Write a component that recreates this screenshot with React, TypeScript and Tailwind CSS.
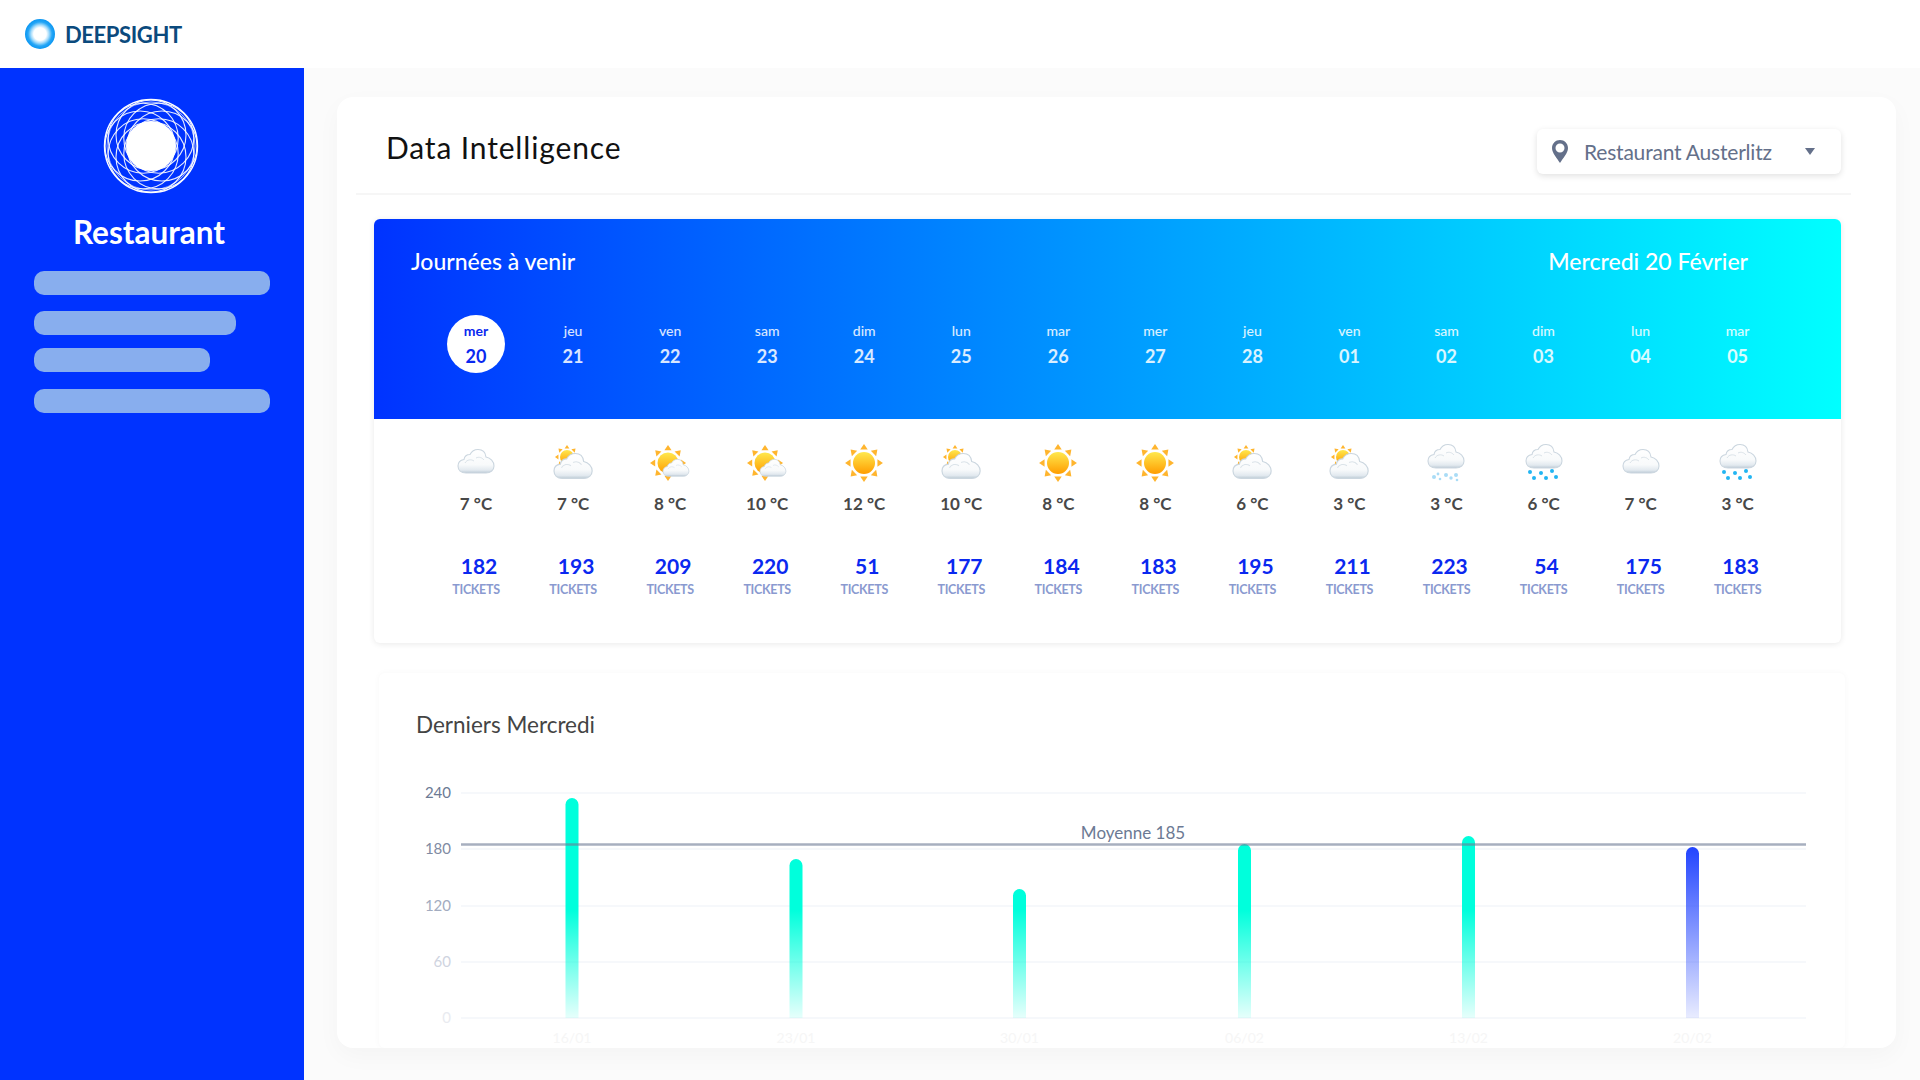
const days = [
  { name: 'mer', date: '20', icon: 'cloud', temp: 7, tickets: 182 },
  { name: 'jeu', date: '21', icon: 'sunBehind', temp: 7, tickets: 193 },
  { name: 'ven', date: '22', icon: 'sunCloud', temp: 8, tickets: 209 },
  { name: 'sam', date: '23', icon: 'sunCloud', temp: 10, tickets: 220 },
  { name: 'dim', date: '24', icon: 'sun', temp: 12, tickets: 51 },
  { name: 'lun', date: '25', icon: 'sunBehind', temp: 10, tickets: 177 },
  { name: 'mar', date: '26', icon: 'sun', temp: 8, tickets: 184 },
  { name: 'mer', date: '27', icon: 'sun', temp: 8, tickets: 183 },
  { name: 'jeu', date: '28', icon: 'sunBehind', temp: 6, tickets: 195 },
  { name: 'ven', date: '01', icon: 'sunBehind', temp: 3, tickets: 211 },
  { name: 'sam', date: '02', icon: 'snow', temp: 3, tickets: 223 },
  { name: 'dim', date: '03', icon: 'rain', temp: 6, tickets: 54 },
  { name: 'lun', date: '04', icon: 'cloud', temp: 7, tickets: 175 },
  { name: 'mar', date: '05', icon: 'rain', temp: 3, tickets: 183 }
]

const menuBars = [
  { width: 'w-[236px]', margin: 'mt-0' },
  { width: 'w-[202px]', margin: 'mt-[16px]' },
  { width: 'w-[176px]', margin: 'mt-[13px]' },
  { width: 'w-[236px]', margin: 'mt-[17px]' }
]

const cloudPath = 'M8 24C3 24 0 21 0 17C0 13.500 2.500 11 6 10.500C6.500 7.500 9 5.500 12 5.500C13.500 2.500 16.500 0.500 20 0.500C24.500 0.500 27.500 3.500 28 8C32.500 9 36 12.500 36 17C36 21 32.500 24 28 24Z'

function Cloud({ x, y, scale = 1 }: { x: number; y: number; scale?: number }) {
  return (
    <g transform={`translate(${x} ${y}) scale(${scale})`}>
      <path d={cloudPath} fill="url(#cloudFill)" stroke="#cbd6df" strokeWidth="1.100" />
      <path d="M7 14C9 10.500 13 10 16 12M18 9C21 7.500 24 8.500 26 11" fill="none" stroke="#dbe3e9" strokeWidth="1" />
    </g>
  )
}

function Sun({ cx, cy, r }: { cx: number; cy: number; r: number }) {
  const rays = [0, 45, 90, 135, 180, 225, 270, 315]
  return (
    <g>
      {rays.map((angle) => (
        <polygon
          key={angle}
          transform={`rotate(${angle} ${cx} ${cy})`}
          points={`${cx - r * 0.34},${cy - r * 1.22} ${cx + r * 0.34},${cy - r * 1.22} ${cx},${cy - r * 1.72}`}
          fill="#ffb52e"
        />
      ))}
      <circle cx={cx} cy={cy} r={r} fill="url(#sunFill)" />
    </g>
  )
}

function WeatherIcon({ type }: { type: string }) {
  return (
    <svg width="40" height="40" viewBox="0 0 40 40">
      {type === 'cloud' && <Cloud x={2} y={6} />}
      {type === 'sun' && <Sun cx={20} cy={20} r={11} />}
      {type === 'sunCloud' && (
        <>
          <Sun cx={18} cy={20} r={10.5} />
          <Cloud x={13} y={16} scale={0.72} />
        </>
      )}
      {type === 'sunBehind' && (
        <>
          <Sun cx={14} cy={14} r={7} />
          <Cloud x={1} y={10} scale={1.06} />
        </>
      )}
      {type === 'rain' && (
        <>
          <Cloud x={2} y={1} />
          {[[5, 29], [9, 35], [16, 30], [21, 35], [27, 28], [31, 34]].map(([cx, cy]) => (
            <circle key={cx} cx={cx + 1} cy={cy} r="2" fill="#22b5f2" />
          ))}
        </>
      )}
      {type === 'snow' && (
        <>
          <Cloud x={2} y={1} />
          {[[8, 34, 2], [12, 31, 1.4], [14, 36, 1.3], [20, 32, 2], [25, 35, 1.7], [30, 32, 2], [31, 37, 1.3]].map(([cx, cy, r]) => (
            <circle key={`${cx}-${cy}`} cx={cx} cy={cy} r={r} fill="#a9dcf6" />
          ))}
        </>
      )}
    </svg>
  )
}

function SidebarLogo() {
  const angles = [0, 45, 90, 135, 180, 225, 270, 315]
  return (
    <svg width="96" height="96" viewBox="0 0 96 96" className="block">
      <circle cx="48" cy="48" r="46.500" fill="none" stroke="white" strokeWidth="1.400" />
      <circle cx="48" cy="48" r="44" fill="none" stroke="white" strokeWidth="0.800" opacity="0.8" />
      {angles.map((angle) => (
        <circle
          key={angle}
          transform={`rotate(${angle} 48 48)`}
          cx="48"
          cy="37"
          r="35"
          fill="none"
          stroke="white"
          strokeWidth="1.100"
          opacity="0.9"
        />
      ))}
      <circle cx="48" cy="48" r="25" fill="white" />
    </svg>
  )
}

const grid = [
  { label: '240', y: 33, color: '#6c7a94' },
  { label: '180', y: 89, color: '#7f8ba3' },
  { label: '120', y: 146, color: '#a3acc0' },
  { label: '60', y: 202, color: '#cfd4df' },
  { label: '0', y: 258, color: '#e9ebf0' }
]

const bars = [
  { x: 193, top: 38, label: '16/01' },
  { x: 417, top: 99, label: '23/01' },
  { x: 640.5, top: 129, label: '30/01' },
  { x: 865.5, top: 84, label: '06/02' },
  { x: 1089.5, top: 76, label: '13/02' },
  { x: 1313.5, top: 87, label: '20/02', current: true }
]

function Chart() {
  return (
    <svg width="1466" height="288" viewBox="0 0 1466 288" className="block">
      <defs>
        <linearGradient id="barTeal" gradientUnits="userSpaceOnUse" x1="0" y1="150" x2="0" y2="260">
          <stop offset="0" stopColor="#00ffdc" />
          <stop offset="1" stopColor="#00ffdc" stopOpacity="0.08" />
        </linearGradient>
        <linearGradient id="barBlue" x1="0" y1="0" x2="0" y2="1">
          <stop offset="0" stopColor="#2244ff" />
          <stop offset="1" stopColor="#2244ff" stopOpacity="0.1" />
        </linearGradient>
      </defs>
      {grid.map((line) => (
        <g key={line.label}>
          <line x1="82" x2="1427" y1={line.y} y2={line.y} stroke="#f6f8fb" strokeWidth="2" />
          <text x="72" y={line.y + 5} textAnchor="end" fontSize="15" fill={line.color}>
            {line.label}
          </text>
        </g>
      ))}
      {bars.map((bar) => (
        <g key={bar.label}>
          <path
            d={`M${bar.x - 6.5} 258V${bar.top + 6.5}a6.5 6.5 0 0 1 13 0V258Z`}
            fill={bar.current ? 'url(#barBlue)' : 'url(#barTeal)'}
          />
          <text x={bar.x} y="283" textAnchor="middle" fontSize="14" fill="#f6f6f6">
            {bar.label}
          </text>
        </g>
      ))}
      <line x1="82" x2="1427" y1="84.5" y2="84.5" stroke="#6c7a94" strokeOpacity="0.6" strokeWidth="2.500" />
      <text x="754" y="79" textAnchor="middle" fontSize="17" fill="#6c7a94">
        Moyenne 185
      </text>
    </svg>
  )
}

export default function App() {
  return (
    <div className="flex h-[1080px] flex-col overflow-hidden bg-[#fbfbfb] [font-family:Lato,sans-serif]">
      {/* Top bar */}
      <header className="flex h-[68px] shrink-0 items-center gap-[10px] bg-white pl-[25px]">
        <span className="h-[30px] w-[30px] rounded-full bg-[radial-gradient(circle_closest-side,#ffffff_0%,#ffffff_42%,#a6dcfb_60%,#25a6f6_80%,#0a96f2_100%)]" />
        <span className="text-[22px] font-bold tracking-[-0.4px] text-[#0b4a7d]">DEEPSIGHT</span>
      </header>

      <div className="flex min-h-0 flex-1">
        {/* Sidebar */}
        <aside className="flex w-[304px] shrink-0 flex-col bg-[#0033ff] pl-[34px] pt-[30px]">
          <div className="flex w-[234px] justify-center">
            <SidebarLogo />
          </div>
          <h2 className="mt-[19px] w-[230px] text-center text-[31.500px] font-bold leading-[38px] text-white">Restaurant</h2>
          <div className="mt-[20px] flex flex-col">
            {menuBars.map((bar, i) => (
              <div key={i} className={`h-[24px] rounded-[10px] bg-[#88aeee] ${bar.width} ${bar.margin}`} />
            ))}
          </div>
        </aside>

        {/* Main */}
        <main className="min-w-0 flex-1 pl-[33px] pr-[24px] pt-[29px]">
          <div className="h-[951px] overflow-hidden rounded-[16px] bg-white shadow-[0_8px_24px_rgba(0,0,0,0.03)]">
            <div className="ml-[19px] mr-[45px] flex h-[98px] items-start justify-between border-b-2 border-[#f6f6f6] pl-[30px] pr-[10px]">
              <h1 className="mt-[30px] text-[30px] leading-[40px] tracking-[0.85px] text-[#111111]">Data Intelligence</h1>
              <button className="mt-[32px] flex h-[45px] w-[304px] items-center rounded-[6px] bg-white pl-[15px] shadow-[0_2px_6px_rgba(0,0,0,0.12)]">
                <svg width="16" height="23" viewBox="0 0 16 23">
                  <path fillRule="evenodd" fill="#64708a" d="M8 0C3.600 0 0 3.500 0 8c0 5 5 10 8 15 3-5 8-10 8-15 0-4.500-3.600-8-8-8Zm0 3.500a4.500 4.500 0 1 1 0 9 4.500 4.500 0 0 1 0-9Z" />
                </svg>
                <span className="ml-[16px] text-[21px] tracking-[-0.2px] text-[#64708a]">Restaurant Austerlitz</span>
                <span className="ml-auto mr-[26px] h-0 w-0 border-x-[5.500px] border-t-[7px] border-x-transparent border-t-[#64708a]" />
              </button>
            </div>

            {/* Upcoming days */}
            <section className="ml-[37px] mt-[24px] w-[1467px] overflow-hidden rounded-[6px] bg-white shadow-[0_1px_6px_rgba(0,0,0,0.09)]">
              <div className="h-[200px] bg-[linear-gradient(90deg,#0033ff,#00ffff)] text-white">
                <div className="flex justify-between pl-[37px] pr-[93px] pt-[28px] text-[23px] font-medium leading-[28px]">
                  <span>Journées à venir</span>
                  <span>Mercredi 20 Février</span>
                </div>
                <div className="ml-[53.500px] mt-[40px] grid grid-cols-[repeat(14,97.05px)]">
                  {days.map((day, i) => (
                    <div key={day.date} className="flex justify-center">
                      <div className={`flex h-[58px] w-[58px] flex-col items-center rounded-full pt-[6px] ${i === 0 ? 'bg-white text-[#0a28f0]' : 'text-white/85'}`}>
                        <span className={`text-[14px] leading-[20px] ${i === 0 ? 'font-bold' : 'font-medium'}`}>{day.name}</span>
                        <span className="mt-[3px] text-[18px] font-bold leading-[24px]">{day.date}</span>
                      </div>
                    </div>
                  ))}
                </div>
              </div>
              <div className="ml-[53.500px] grid h-[224px] grid-cols-[repeat(14,97.05px)] pt-[24px]">
                {days.map((day) => (
                  <div key={day.date} className="flex flex-col items-center">
                    <WeatherIcon type={day.icon} />
                    <span className="mt-[10px] text-[17px] font-bold leading-[22px] text-[#484848]">{day.temp} °C</span>
                    <span className="ml-[6px] mt-[38px] text-[21px] font-bold leading-[26px] text-[#0a28f0]">{day.tickets}</span>
                    <span className="mt-[3px] text-[12.500px] font-bold leading-[16px] tracking-[-0.3px] text-[#8a9ad0]">TICKETS</span>
                  </div>
                ))}
              </div>
            </section>

            {/* Last Wednesdays */}
            <section className="ml-[42px] mt-[30px] w-[1466px] rounded-[6px] bg-white shadow-[0_0_6px_rgba(0,0,0,0.035)]">
              <h3 className="mb-[20px] pl-[37px] pt-[37px] text-[22.500px] leading-[30px] text-[#444444]">Derniers Mercredi</h3>
              <Chart />
            </section>
          </div>
        </main>
      </div>

      {/* Shared icon gradients */}
      <svg width="0" height="0" className="block">
        <defs>
          <linearGradient id="cloudFill" x1="0" y1="0" x2="0" y2="1">
            <stop offset="0" stopColor="#ffffff" />
            <stop offset="0.65" stopColor="#f8fafb" />
            <stop offset="0.88" stopColor="#e2e9ef" />
            <stop offset="1" stopColor="#bccad5" />
          </linearGradient>
          <linearGradient id="sunFill" x1="0" y1="0" x2="0" y2="1">
            <stop offset="0" stopColor="#ffe84d" />
            <stop offset="1" stopColor="#ff9d00" />
          </linearGradient>
        </defs>
      </svg>
    </div>
  )
}
